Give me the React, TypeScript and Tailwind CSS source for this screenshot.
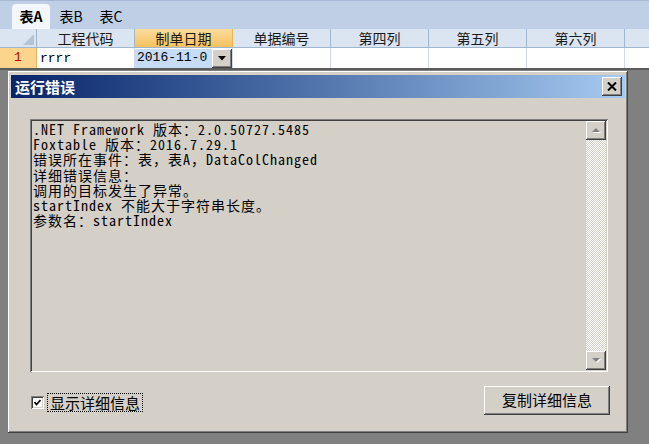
import React from "react";

const cols = ["单据编号", "第四列", "第五列", "第六列"];

const raised =
  "shadow-[inset_-1px_-1px_#404040,inset_1px_1px_#ffffff,inset_-2px_-2px_#808080,inset_2px_2px_#d4d0c8]";
const sunken =
  "shadow-[inset_1px_1px_#808080,inset_-1px_-1px_#ffffff,inset_2px_2px_#404040,inset_-2px_-2px_#d4d0c8]";

const lines = [
  ".NET Framework 版本：2.0.50727.5485",
  "Foxtable 版本：2016.7.29.1",
  "错误所在事件：表，表A，DataColChanged",
  "详细错误信息：",
  "调用的目标发生了异常。",
  "startIndex 不能大于字符串长度。",
  "参数名：startIndex",
];

const ScrollArrow = ({ down }: { down?: boolean }) => (
  <div className={`w-[20px] h-[19px] bg-[#d4d0c8] flex items-center justify-center ${raised}`}>
    <svg width="9" height="6" viewBox="0 0 9 6">
      {down ? (
        <>
          <polygon points="1,1 9,1 5,5" fill="#ffffff" />
          <polygon points="0,0 8,0 4,4" fill="#808080" />
        </>
      ) : (
        <>
          <polygon points="1,5 9,5 5,1" fill="#ffffff" />
          <polygon points="0,4 8,4 4,0" fill="#808080" />
        </>
      )}
    </svg>
  </div>
);

export default function App() {
  return (
    <div className="w-[649px] h-[444px] bg-[#808080] flex flex-col overflow-hidden font-['Noto_Sans_CJK_SC',sans-serif] text-black">
      {/* tabs */}
      <div className="h-[29px] bg-[#bfd0e6] border-t border-[#a5b9d6] flex items-end pl-[12px] gap-[2px] text-[14px]">
        <div className="w-[38px] h-[25px] bg-[#f3f6fb] rounded-t-[4px] flex items-center justify-center font-bold">
          表A
        </div>
        <div className="w-[38px] h-[25px] flex items-center justify-center">表B</div>
        <div className="w-[38px] h-[25px] flex items-center justify-center">表C</div>
      </div>

      {/* header */}
      <div className="h-[19px] flex bg-[#dbe5f2] border-b border-[#9eb6ce] text-[14px] leading-[18px] text-[#1a1a1a]">
        <div className="w-[37px] border-r border-[#9eb6ce] relative">
          <svg className="absolute right-[2px] bottom-[2px]" width="11" height="11" viewBox="0 0 11 11">
            <polygon points="11,0 11,11 0,11" fill="#b4c3d6" />
          </svg>
        </div>
        <div className="w-[98px] border-r border-[#9eb6ce] text-center">工程代码</div>
        <div className="w-[98px] border-r border-[#f0b444] text-center bg-gradient-to-b from-[#fbdc9c] to-[#f5c15c]">
          制单日期
        </div>
        {cols.map((c) => (
          <div key={c} className="w-[98px] border-r border-[#9eb6ce] text-center">
            {c}
          </div>
        ))}
        <div className="flex-1" />
      </div>

      {/* data row */}
      <div className="h-[22px] flex bg-white border-b-[2px] border-[#5c5c5c] font-['Liberation_Mono',monospace] text-[13px]">
        <div className="w-[37px] bg-[#fcd48c] border-r border-[#e8b45a] text-[#c00000] pl-[14px] leading-[20px]">1</div>
        <div className="w-[98px] border-r border-[#d0d7e5] pl-[3px] leading-[22px]">rrrr</div>
        <div className="w-[98px] border-r border-[#d0d7e5] flex">
          <div className="flex-1 bg-[#c6dcf6] pl-[2px] leading-[18px] h-[19px] mt-[1px]">2016-11-0</div>
          <div className={`w-[20px] h-[19px] mt-[1px] bg-[#d4d0c8] flex items-center justify-center ${raised}`}>
            <svg width="8" height="5" viewBox="0 0 8 5">
              <polygon points="0,0 8,0 4,4.5" fill="#000" />
            </svg>
          </div>
        </div>
        {cols.map((c) => (
          <div key={c} className="w-[98px] border-r border-[#d0d7e5]" />
        ))}
        <div className="flex-1" />
      </div>

      {/* dialog */}
      <div className={`ml-[8px] mt-[1px] w-[620px] h-[362px] bg-[#d4d0c8] flex flex-col p-[3px] ${raised}`}>
        <div className="h-[23px] mt-[1px] bg-gradient-to-r from-[#0a246a] to-[#a6caf0] flex items-center justify-between pl-[4px] pr-[3px]">
          <span className="text-white font-bold text-[15px] leading-none">运行错误</span>
          <div className={`w-[20px] h-[19px] bg-[#d4d0c8] flex items-center justify-center ${raised}`}>
            <svg width="10" height="9" viewBox="0 0 10 9">
              <path d="M1 0.5 L9 8.5 M9 0.5 L1 8.5" stroke="#000" strokeWidth="2" />
            </svg>
          </div>
        </div>

        <div className="flex-1 flex flex-col pl-[19px] pr-[17px] pt-[21px]">
          <div className={`h-[253px] flex p-[2px] ${sunken}`}>
            <div className="flex-1 pl-[1px] pt-[1px] font-['Noto_Sans_Mono_CJK_SC','Liberation_Mono',monospace] text-[14px] tracking-[1px] leading-[15.2px] whitespace-pre">
              {lines.map((l) => (
                <div key={l}>{l}</div>
              ))}
            </div>
            <div className="w-[20px] flex flex-col bg-[repeating-conic-gradient(#ffffff_0_25%,#d4d0c8_0_50%)] bg-[length:2px_2px]">
              <ScrollArrow />
              <div className="flex-1" />
              <ScrollArrow down />
            </div>
          </div>

          <div className="mt-[14px] h-[29px] flex items-center justify-between">
            <div className="flex items-center mt-[3px] ml-[1px]">
              <div className={`w-[13px] h-[13px] bg-white flex items-center justify-center ${sunken}`}>
                <svg width="7" height="7" viewBox="0 0 7 7">
                  <path d="M0.5 3 L2.5 5.5 L6.5 1" stroke="#000" strokeWidth="1.6" fill="none" />
                </svg>
              </div>
              <div className="ml-[3px] h-[19px] px-[2px] border border-dotted border-black text-[15px] leading-[17px]">
                显示详细信息
              </div>
            </div>
            <div className={`w-[126px] h-[29px] -mr-[2px] flex items-center justify-center text-[15px] ${raised}`}>
              复制详细信息
            </div>
          </div>
        </div>
      </div>
    </div>
  );
}
